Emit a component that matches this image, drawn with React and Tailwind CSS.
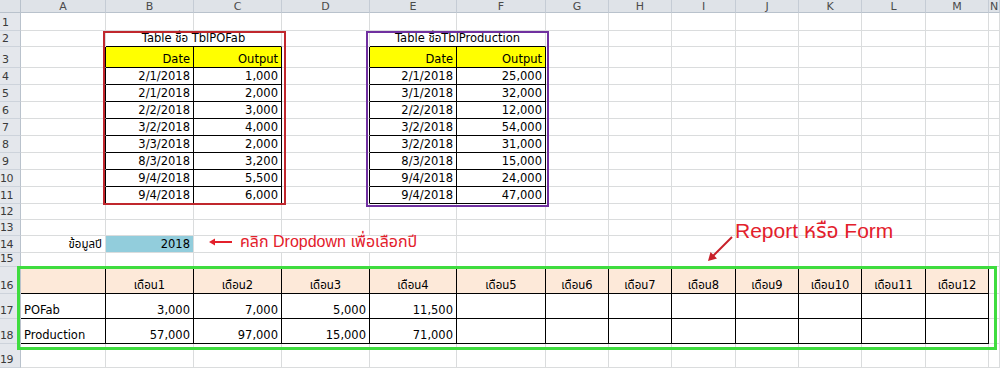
import React from 'react';

const COLS = ['A', 'B', 'C', 'D', 'E', 'F', 'G', 'H', 'I', 'J', 'K', 'L', 'M', 'N'];
const ROWS = 19;

const t1 = [
  ['2/1/2018', '1,000'], ['2/1/2018', '2,000'], ['2/2/2018', '3,000'], ['3/2/2018', '4,000'],
  ['3/3/2018', '2,000'], ['8/3/2018', '3,200'], ['9/4/2018', '5,500'], ['9/4/2018', '6,000'],
];
const t2 = [
  ['2/1/2018', '25,000'], ['3/1/2018', '32,000'], ['2/2/2018', '12,000'], ['3/2/2018', '54,000'],
  ['3/2/2018', '31,000'], ['8/3/2018', '15,000'], ['9/4/2018', '24,000'], ['9/4/2018', '47,000'],
];

// cell content, keyed like "B3"
const cells = {};
cells.B2 = { text: 'Table ชื่อ TblPOFab', align: 'center', span: 2 };
cells.E2 = { text: 'Table ชื่อTblProduction', align: 'center', span: 2 };
cells.B3 = { text: 'Date', bg: 'yellow' };
cells.C3 = { text: 'Output', bg: 'yellow' };
cells.E3 = { text: 'Date', bg: 'yellow' };
cells.F3 = { text: 'Output', bg: 'yellow' };
t1.forEach(([d, v], i) => {
  cells[`B${i + 4}`] = { text: d };
  cells[`C${i + 4}`] = { text: v };
});
t2.forEach(([d, v], i) => {
  cells[`E${i + 4}`] = { text: d };
  cells[`F${i + 4}`] = { text: v };
});
cells.A14 = { text: 'ข้อมูลปี' };
cells.B14 = { text: '2018', bg: 'blue' };
cells.C14 = { hint: true, span: 3, align: 'left' };
COLS.slice(0, 13).forEach((c, i) => {
  cells[`${c}16`] = { text: i === 0 ? '' : `เดือน${i}`, align: 'center', bg: 'peach' };
});
cells.A17 = { text: 'POFab', align: 'left' };
cells.A18 = { text: 'Production', align: 'left' };
['3,000', '7,000', '5,000', '11,500'].forEach((v, i) => { cells[`${COLS[i + 1]}17`] = { text: v }; });
['57,000', '97,000', '15,000', '71,000'].forEach((v, i) => { cells[`${COLS[i + 1]}18`] = { text: v }; });

const inTable = (ci, r) =>
  (r >= 3 && r <= 11 && (ci === 1 || ci === 2 || ci === 4 || ci === 5)) ||
  (r >= 16 && r <= 18 && ci <= 12);

const rightBlack = (ci, r) => inTable(ci, r) || inTable(ci + 1, r);
const bottomBlack = (ci, r) => inTable(ci, r) || inTable(ci, r + 1);

function HintText() {
  return (
    <span className="flex items-center font-['Liberation_Sans','Noto_Sans_Thai',sans-serif] text-[16px] leading-[16px] text-[#e3202b] pl-[12px] pb-[1px]">
      <svg width="24" height="8" viewBox="0 0 24 8" className="mr-[7px]">
        <line x1="3" y1="4" x2="23" y2="4" stroke="#e3202b" strokeWidth="2" />
        <path d="M0 4 L6 0.5 L6 7.5 Z" fill="#e3202b" />
      </svg>
      คลิก Dropdown เพื่อเลือกปี
    </span>
  );
}

function Cell({ ci, r, cell }) {
  const bg =
    cell?.bg === 'yellow' ? 'bg-[#ffff00]' :
    cell?.bg === 'blue' ? 'bg-[#92cddc]' :
    cell?.bg === 'peach' ? 'bg-[#fde9d9]' : 'bg-white';
  const align =
    cell?.align === 'center' ? 'justify-center' :
    cell?.align === 'left' ? 'justify-start' : 'justify-end';
  const span = cell?.span === 3 ? 'col-span-3' : cell?.span === 2 ? 'col-span-2' : '';
  const lastCol = ci + (cell?.span || 1) - 1;
  return (
    <div
      className={`flex items-end px-[3px] pb-[1px] leading-[14px] whitespace-nowrap overflow-visible border-r border-b ${bg} ${align} ${span} ${
        rightBlack(lastCol, r) ? 'border-r-black' : 'border-r-[#dadcdd]'
      } ${bottomBlack(ci, r) ? 'border-b-black' : 'border-b-[#dadcdd]'}`}
    >
      {cell?.hint ? <HintText /> : cell?.text}
    </div>
  );
}

export default function App() {
  const grid = [];

  // column header row
  grid.push(<div key="corner" className="bg-[#dfe3e8] border-r border-b border-[#b9c2cc]" />);
  COLS.forEach((c) => {
    grid.push(
      <div
        key={`h-${c}`}
        className="flex items-center justify-center bg-[#dfe3e8] border-r border-b border-r-[#c5ccd5] border-b-[#b9c2cc] text-[11px] leading-none text-[#4a4a4a]"
      >
        {c}
      </div>
    );
  });

  for (let r = 1; r <= ROWS; r++) {
    grid.push(
      <div
        key={`rh-${r}`}
        className={`flex items-end justify-start pb-[1px] leading-[12px] bg-[#e4e7ec] border-r border-b border-r-[#b9c2cc] border-b-[#cdd3db] text-[11px] text-[#3a3a3a] whitespace-nowrap overflow-hidden ${
          r < 10 ? 'pl-[2px]' : 'pl-0 tracking-[-0.6px]'
        }`}
      >
        {r}
      </div>
    );
    let skip = 0;
    COLS.forEach((c, ci) => {
      if (skip > 0) {
        skip--;
        return;
      }
      const cell = cells[`${c}${r}`];
      if (cell?.span) skip = cell.span - 1;
      grid.push(<Cell key={`${c}${r}`} ci={ci} r={r} cell={cell} />);
    });
  }

  return (
    <div className="relative w-[1000px] h-[368px] overflow-hidden bg-white font-['DejaVu_Sans','Noto_Sans_Thai','Noto_Sans',sans-serif] text-[11.5px] text-black">
      <div className="grid h-full grid-cols-[21px_85px_88px_88px_88px_87px_89px_63px_63px_64px_63px_63px_64px_63px_1fr] grid-rows-[13px_18px_16px_21px_repeat(8,17px)_16px_16px_17px_14px_27px_25px_25px_1fr]">
        {grid}
      </div>

      {/* shapes drawn over the sheet */}
      <div className="absolute left-[103px] top-[31px] w-[183px] h-[174px] border-2 border-[#c0272d]" />
      <div className="absolute left-[366px] top-[31px] w-[183px] h-[176px] border-2 border-[#7030a0]" />
      <div className="absolute left-[17px] top-[266px] w-[980px] h-[84px] border-[3px] border-[#3fdc3f]" />

      <div className="absolute left-[735px] top-[220px] font-['Liberation_Sans','Noto_Sans_Thai',sans-serif] text-[21px] leading-none text-[#e3202b] whitespace-nowrap">
        Report หรือ Form
      </div>
      <svg className="absolute left-[704px] top-[234px]" width="32" height="32" viewBox="0 0 32 32">
        <line x1="28" y1="3" x2="8" y2="23" stroke="#c8202a" strokeWidth="2" />
        <path d="M4 27 L6.5 18 L13 24.5 Z" fill="#c8202a" />
      </svg>
    </div>
  );
}
